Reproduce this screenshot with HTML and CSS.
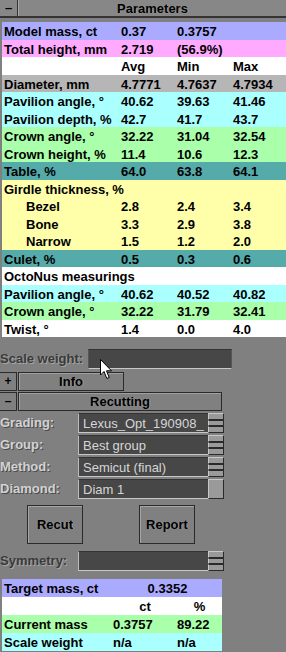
FILE: index.html
```html
<!DOCTYPE html>
<html lang="en">

<head>
    <meta charset="UTF-8">
    <meta name="viewport" content="width=device-width, initial-scale=1.0">
    <title>Parameters</title>
    <link rel="stylesheet" href="styles.css">
</head>

<body>
    <div class="panel-head">
        <div class="toggle">&ndash;</div>
        <div class="head-title">Parameters</div>
    </div>

    <div class="params">
        <div class="row blue"><span>Model mass, ct</span><span>0.37</span><span>0.3757</span><span></span></div>
        <div class="row pink"><span>Total height, mm</span><span>2.719</span><span>(56.9%)</span><span></span></div>
        <div class="row white"><span></span><span>Avg</span><span>Min</span><span>Max</span></div>
        <div class="row gray"><span>Diameter, mm</span><span>4.7771</span><span>4.7637</span><span>4.7934</span></div>
        <div class="row cyan"><span>Pavilion angle, &deg;</span><span>40.62</span><span>39.63</span><span>41.46</span></div>
        <div class="row cyan"><span>Pavilion depth, %</span><span>42.7</span><span>41.7</span><span>43.7</span></div>
        <div class="row green"><span>Crown angle, &deg;</span><span>32.22</span><span>31.04</span><span>32.54</span></div>
        <div class="row green"><span>Crown height, %</span><span>11.4</span><span>10.6</span><span>12.3</span></div>
        <div class="row teal"><span>Table, %</span><span>64.0</span><span>63.8</span><span>64.1</span></div>
        <div class="row yellow"><span>Girdle thickness, %</span><span></span><span></span><span></span></div>
        <div class="row yellow sub"><span>Bezel</span><span>2.8</span><span>2.4</span><span>3.4</span></div>
        <div class="row yellow sub"><span>Bone</span><span>3.3</span><span>2.9</span><span>3.8</span></div>
        <div class="row yellow sub"><span>Narrow</span><span>1.5</span><span>1.2</span><span>2.0</span></div>
        <div class="row teal"><span>Culet, %</span><span>0.5</span><span>0.3</span><span>0.6</span></div>
        <div class="row white"><span class="wide">OctoNus measurings</span></div>
        <div class="row cyan"><span>Pavilion angle, &deg;</span><span>40.62</span><span>40.52</span><span>40.82</span></div>
        <div class="row green"><span>Crown angle, &deg;</span><span>32.22</span><span>31.79</span><span>32.41</span></div>
        <div class="row white"><span>Twist, &deg;</span><span>1.4</span><span>0.0</span><span>4.0</span></div>
    </div>

    <div class="scale-row">
        <div class="dim-label">Scale weight:</div>
        <div class="field scale-field"></div>
    </div>

    <div class="bar-row">
        <div class="bar-toggle">+</div>
        <div class="bar-btn info-btn">Info</div>
    </div>
    <div class="bar-row tight">
        <div class="bar-toggle">&ndash;</div>
        <div class="bar-btn recut-bar">Recutting</div>
    </div>

    <div class="form-row first">
        <div class="form-label">Grading:</div>
        <div class="field">Lexus_Opt_190908_</div>
        <div class="spin"><i></i><i></i><i></i></div>
    </div>
    <div class="form-row">
        <div class="form-label">Group:</div>
        <div class="field">Best group</div>
        <div class="spin"><i></i><i></i><i></i></div>
    </div>
    <div class="form-row">
        <div class="form-label">Method:</div>
        <div class="field">Semicut (final)</div>
        <div class="spin"><i></i><i></i><i></i></div>
    </div>
    <div class="form-row">
        <div class="form-label">Diamond:</div>
        <div class="field">Diam 1</div>
        <div class="spin"><i></i></div>
    </div>

    <div class="btn-row">
        <div class="big-btn">Recut</div>
        <div class="big-btn">Report</div>
    </div>

    <div class="form-row symmetry">
        <div class="form-label dark">Symmetry:</div>
        <div class="field"></div>
        <div class="spin"><i></i><i></i><i></i></div>
    </div>

    <div class="result">
        <div class="res-row blue"><span>Target mass, ct</span><span class="span2">0.3352</span></div>
        <div class="res-row white"><span></span><span class="center">ct</span><span class="center">%</span></div>
        <div class="res-row green"><span>Current mass</span><span>0.3757</span><span>89.22</span></div>
        <div class="res-row cyan"><span>Scale weight</span><span>n/a</span><span>n/a</span></div>
    </div>

    <!-- mouse pointer sitting over the scale weight field -->
    <svg class="cursor" width="13" height="21" viewBox="0 0 13 21">
        <path d="M0.5 0.5 L0.5 16 L4 12.5 L6.8 19.5 L9.2 18.5 L6.5 11.8 L11.5 11.8 Z" fill="#fff" stroke="#000"
            stroke-width="1" />
    </svg>
</body>

</html>
```

FILE: styles.css
```css
body {
    margin: 0;
    width: 286px;
    height: 652px;
    overflow: hidden;
    position: relative;
    background-color: #808080;
    font-family: "Liberation Sans", Arial, sans-serif;
    font-weight: bold;
    font-size: 13px;
    color: #000;
}

/* Parameters header */
.panel-head {
    display: flex;
    height: 16px;
    background-color: #878787;
    border-bottom: 2px solid #333;
    margin-bottom: 4px;
}

.toggle {
    width: 17px;
    border-right: 1px solid #333;
    text-align: center;
    line-height: 16px;
}

.head-title {
    flex: 1;
    border-left: 1px solid #a9a9a9;
    text-align: center;
    line-height: 17px;
    text-shadow: 1px 0 0 #9a9a9a;
}

/* Parameters table */
.params {
    margin-left: 2px;
}

.row {
    display: grid;
    grid-template-columns: 117px 56px 56px 1fr;
    height: 17.5px;
    line-height: 19px;
    padding-left: 2px;
    white-space: nowrap;
}

.row .wide {
    grid-column: 1 / 5;
}

.row.sub span:first-child {
    padding-left: 22px;
}

.blue {
    background-color: #aaaaff;
}

.pink {
    background-color: #ffaaff;
}

.white {
    background-color: #fff;
}

.gray {
    background-color: #b6b6b6;
}

.cyan {
    background-color: #aaffff;
}

.green {
    background-color: #aaffaa;
}

.teal {
    background-color: #55aaaa;
}

.yellow {
    background-color: #ffffaa;
}

/* Lower controls */
.scale-row {
    display: flex;
    margin-top: 12px;
    height: 20px;
}

.dim-label {
    width: 88px;
    line-height: 20px;
    color: #3a3a3a;
    text-shadow: 1px 1px 0 #a6a6a6;
    white-space: nowrap;
}

.field {
    width: 125px;
    height: 18px;
    background-color: #474747;
    border-top: 1px solid #333;
    border-left: 1px solid #bbb;
    border-bottom: 1px solid #c8c8c8;
    padding-left: 4px;
    line-height: 19px;
    color: #d6d6d6;
    font-weight: normal;
    white-space: nowrap;
    overflow: hidden;
}

.scale-field {
    width: 142px;
    padding-left: 0;
    border-left-color: #555;
    border-right: 1px solid #555;
}

.bar-row {
    display: flex;
    height: 19px;
    margin-top: 3px;
}

.bar-row.tight {
    margin-top: 1px;
}

.bar-toggle {
    width: 16px;
    height: 17px;
    border: 1px solid #2a2a2a;
    border-left: none;
    line-height: 17px;
    text-align: center;
    font-size: 12px;
}

.bar-btn {
    margin-left: 1px;
    height: 17px;
    border: 1px solid #2a2a2a;
    box-shadow: inset 1px 1px 0 #a0a0a0;
    text-align: center;
    line-height: 18px;
    text-shadow: 1px 0 0 #9a9a9a;
}

.info-btn {
    width: 104px;
}

.recut-bar {
    width: 202px;
}

.form-row {
    display: flex;
    height: 20px;
    margin-top: 2px;
}

.form-row.first {
    margin-top: 2px;
}

.form-label {
    width: 78px;
    line-height: 20px;
    color: #d2d2d2;
    text-shadow: 1px 1px 0 #4a4a4a;
}

.form-label.dark {
    color: #3a3a3a;
    text-shadow: 1px 1px 0 #a6a6a6;
}

.spin {
    width: 16px;
    height: 20px;
    display: flex;
    flex-direction: column;
}

.spin i {
    flex: 1;
    background-color: #9a9a9a;
    border: 1px solid #2a2a2a;
    border-top-color: #c8c8c8;
    border-left-color: #c8c8c8;
}

.spin i + i {
    border-top: 1px solid #2a2a2a;
}

.btn-row {
    display: flex;
    gap: 56px;
    margin-top: 6px;
    padding-left: 27px;
}

.big-btn {
    width: 54px;
    height: 37px;
    border: 1px solid #2a2a2a;
    box-shadow: inset 1px 1px 0 #a6a6a6;
    text-align: center;
    line-height: 38px;
    text-shadow: 1px 0 0 #9a9a9a;
}

.form-row.symmetry {
    margin-top: 7px;
}

/* Result table */
.result {
    margin: 8px 0 0 2px;
    width: 220px;
}

.res-row {
    display: grid;
    grid-template-columns: 109px 64px 1fr;
    height: 18px;
    line-height: 19px;
    padding-left: 2px;
    white-space: nowrap;
}

.res-row .span2 {
    grid-column: 2 / 4;
    text-align: center;
}

.res-row .center {
    text-align: center;
}

.cursor {
    position: absolute;
    left: 100px;
    top: 359px;
}
```
